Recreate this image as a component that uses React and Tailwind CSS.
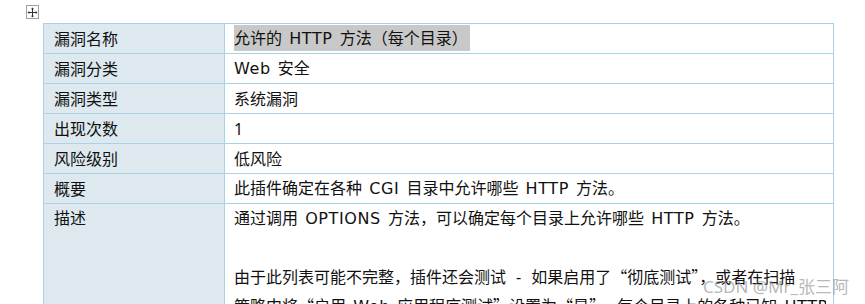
// Word pads latin runs inside CJK text and its latin face is wider; fake it here
function L({ children, first }) {
  return (
    <span className={`${first ? "pr-[3px]" : "px-[3px]"} tracking-[0.6px] font-['DejaVu_Sans']`}>{children}</span>
  )
}

// quotes render full width in the original, so give them the CJK face
function Q({ children }) {
  return <span className="font-['Noto_Sans_CJK_SC']">{children}</span>
}

const rows = [
  ["漏洞名称", <>允许的 <L>HTTP</L> 方法（每个目录）</>],
  ["漏洞分类", <><L first>Web</L> 安全</>],
  ["漏洞类型", "系统漏洞"],
  ["出现次数", "1"],
  ["风险级别", "低风险"],
  ["概要", <>此插件确定在各种 <L>CGI</L> 目录中允许哪些 <L>HTTP</L> 方法。</>],
]

function MoveHandle() {
  return (
    <div className="w-[13px] h-[14px] border border-[#a0a0a0] bg-white flex items-center justify-center">
      <svg width="11" height="11" viewBox="0 0 11 11">
        <path d="M5.5 1v9M1 5.5h9" stroke="#333" strokeWidth="1" />
        <path d="M5.5 0.5l-1.6 1.8h3.2zM5.5 10.5l-1.6-1.8h3.2zM0.5 5.5l1.8-1.6v3.2zM10.5 5.5l-1.8-1.6v3.2z" fill="#333" />
      </svg>
    </div>
  )
}

export default function App() {
  return (
    <div
      className="relative w-[865px] h-[304px] overflow-hidden bg-white text-[#111]"
      style={{ fontFamily: '"Noto Sans", "Noto Sans CJK SC", sans-serif' }}
    >
      <div className="pl-[26px] pt-[5px] h-[23px]">
        <MoveHandle />
      </div>
      <table className="ml-[43px] w-[791px] border-collapse text-[16px]">
        <tbody>
          {rows.map(([label, value], i) => (
            <tr key={label} className="h-[30px]">
              <td className="w-[181px] border border-[#a9d3e5] bg-[#dde9ef] pl-[10px] leading-[28px]">
                {label}
              </td>
              <td className="border border-[#a9d3e5] bg-white pl-[9px] leading-[28px] whitespace-nowrap">
                {i === 0 ? <span className="bg-[#c8c8c8] pr-[2px] py-[2px]">{value}</span> : value}
              </td>
            </tr>
          ))}
          <tr>
            <td className="align-top border border-[#a9d3e5] bg-[#dde9ef] pl-[10px] leading-[29px]">描述</td>
            <td className="align-top border border-[#a9d3e5] bg-white pl-[9px] leading-[29px]">
              <div className="h-[29px] whitespace-nowrap">
                通过调用 <L>OPTIONS</L> 方法，可以确定每个目录上允许哪些 <L>HTTP</L> 方法。
              </div>
              <div className="h-[29px]"></div>
              <div className="h-[29px] whitespace-nowrap">
                由于此列表可能不完整，插件还会测试<span className="px-[10px]">-</span>如果启用了<Q>“</Q>彻底测试<Q>”</Q>，或者在扫描
              </div>
              <div className="h-[29px] w-[592px] whitespace-nowrap overflow-hidden">
                策略中将<Q>“</Q>启用 <L>Web</L> 应用程序测试<Q>”</Q>设置为<Q>“</Q>是<Q>”</Q>， 每个目录上的各种已知 <L>HTTP</L>
              </div>
            </td>
          </tr>
        </tbody>
      </table>
      <div className="absolute left-[703px] top-[274px] text-[17px] text-[#8a8a8a] opacity-60 whitespace-nowrap">
        CSDN @Mr_张三阿
      </div>
    </div>
  )
}
